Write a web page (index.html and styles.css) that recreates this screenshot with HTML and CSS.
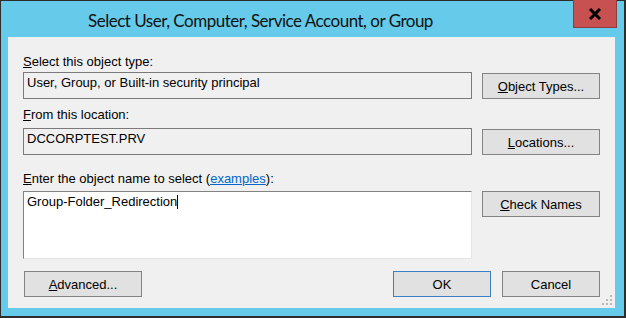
FILE: index.html
```html
<!DOCTYPE html>
<html lang="en">
<head>
    <meta charset="UTF-8">
    <meta name="viewport" content="width=device-width, initial-scale=1.0">
    <title>Select User, Computer, Service Account, or Group</title>
    <link rel="stylesheet" href="styles.css">
</head>
<body>
    <div class="window">
        <div class="titlebar">
            <div class="title">Select User, Computer, Service Account, or Group</div>
            <button class="close" title="Close">
                <svg width="14" height="12" viewBox="0 0 14 12">
                    <path d="M2 1 L12 11 M12 1 L2 11" stroke="#000" stroke-width="3" fill="none"/>
                </svg>
            </button>
        </div>

        <div class="client">
            <div class="label label-first"><u>S</u>elect this object type:</div>
            <div class="row">
                <div class="field">User, Group, or Built-in security principal</div>
                <button class="btn btn-side"><u>O</u>bject Types...</button>
            </div>

            <div class="label label-second"><u>F</u>rom this location:</div>
            <div class="row row-second">
                <div class="field">DCCORPTEST.PRV</div>
                <button class="btn btn-side"><u>L</u>ocations...</button>
            </div>

            <div class="label label-third"><u>E</u>nter the object name to select (<a href="#" class="link">examples</a>):</div>
            <div class="row row-third">
                <div class="names">Group-Folder_Redirection<span class="caret"></span></div>
                <button class="btn btn-check"><u>C</u>heck Names</button>
            </div>

            <div class="footer">
                <button class="btn"><u>A</u>dvanced...</button>
                <div class="footer-right">
                    <button class="btn btn-ok">OK</button>
                    <button class="btn">Cancel</button>
                </div>
            </div>

            <svg class="grip" width="12" height="12" viewBox="0 0 12 12">
                <rect x="9" y="1" width="2" height="2" fill="#b8b8b8"/>
                <rect x="5" y="5" width="2" height="2" fill="#b8b8b8"/>
                <rect x="9" y="5" width="2" height="2" fill="#b8b8b8"/>
                <rect x="1" y="9" width="2" height="2" fill="#b8b8b8"/>
                <rect x="5" y="9" width="2" height="2" fill="#b8b8b8"/>
                <rect x="9" y="9" width="2" height="2" fill="#b8b8b8"/>
            </svg>
        </div>
    </div>
</body>
</html>
```

FILE: styles.css
```css
* {
    margin: 0;
    padding: 0;
    box-sizing: border-box;
}

body {
    background: #ffffff;
    font-family: "Liberation Sans", Arial, sans-serif;
    font-size: 13px;
    line-height: 15px;
    color: #000;
}

.window {
    width: 626px;
    height: 318px;
    background: #66cbea;
    border-style: solid;
    border-color: #2d2d2d;
    border-width: 1px 2px 2px 1px;
}

.titlebar {
    display: flex;
    align-items: flex-start;
    height: 36px;
}

.title {
    padding: 6px 0 0 87px;
    font-family: Lato, "Open Sans", sans-serif;
    font-size: 17px;
    line-height: 27px;
    letter-spacing: -0.5px;
    color: #111;
    white-space: nowrap;
}

.close {
    margin: -1px 7px 0 auto;
    width: 44px;
    height: 28px;
    background: #c75050;
    border: 1px solid #8b3c3c;
    border-top: none;
    display: flex;
    align-items: center;
    justify-content: center;
    cursor: pointer;
}

.client {
    position: relative;
    margin-left: 7px;
    width: 607px;
    height: 271px;
    background: #f0f0f0;
    padding: 17px 15px 0 15px;
}

.label-second {
    margin-top: 8px;
}

.label-third {
    margin-top: 16px;
}

.link {
    color: #0066cc;
}

.row {
    display: flex;
    gap: 10px;
    margin-top: 3px;
}

.row-second {
    margin-top: 6px;
}

.row-third {
    margin-top: 5px;
    align-items: flex-start;
}

.field {
    width: 449px;
    height: 27px;
    border: 1px solid #7a7a7a;
    padding: 2px 3px;
}

.names {
    width: 449px;
    height: 68px;
    background: #fff;
    border-style: solid;
    border-width: 1px;
    border-color: #828282 #e3e3e3 #e3e3e3 #828282;
    padding: 2px 3px;
}

.caret {
    display: inline-block;
    width: 1px;
    height: 14px;
    background: #000;
    vertical-align: -3px;
}

.btn {
    width: 118px;
    height: 26px;
    background: #e1e1e1;
    border: 1px solid #838383;
    font-family: "Liberation Sans", Arial, sans-serif;
    font-size: 13px;
    line-height: 15px;
    color: #000;
    cursor: pointer;
}

.btn-side {
    margin-top: 1px;
}

.btn-ok {
    width: 98px;
    border-color: #3c7fc4;
}

.footer-right .btn:last-child {
    width: 98px;
}

.footer {
    display: flex;
    justify-content: space-between;
    margin-top: 12px;
    padding-left: 1px;
}

.footer-right {
    display: flex;
    gap: 11px;
}

.grip {
    position: absolute;
    right: 2px;
    bottom: 2px;
}
```
